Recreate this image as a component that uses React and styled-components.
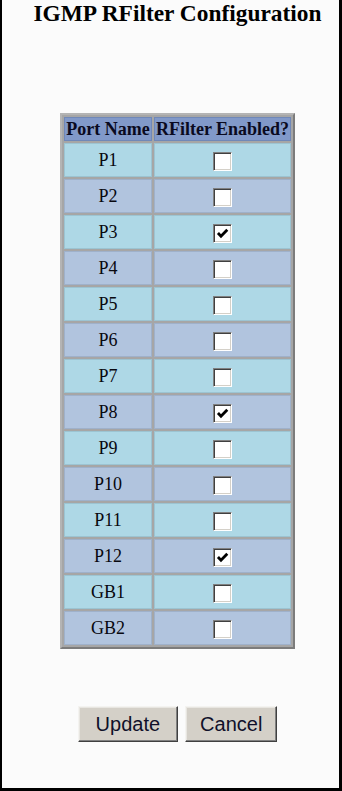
import styled, { createGlobalStyle } from "styled-components"

const GlobalStyle = createGlobalStyle`
  html, body {
    margin: 0;
    padding: 0;
    background: #ffffff;
  }
  * {
    box-sizing: border-box;
  }
`

const Page = styled.div`
  width: 342px;
  height: 791px;
  background: #fbfbfb;
  border-left: 2px solid #000;
  border-right: 3px solid #000;
  border-bottom: 3px solid #000;
  padding-left: 14px;
  display: flex;
  flex-direction: column;
  align-items: center;
  font-family: "Liberation Serif", "Times New Roman", serif;
  color: #000;
`

const Title = styled.h1`
  margin: 0;
  font-size: 23.4px;
  line-height: 27px;
  font-weight: bold;
  white-space: nowrap;
`

const Table = styled.table`
  margin-top: 86px;
  border-collapse: separate;
  border-spacing: 2px;
  background: #a6a6a6;
  border: 2px solid;
  border-color: #b4b4b4 #7c7c7c #7c7c7c #b4b4b4;
`

const HeadCell = styled.th`
  height: 24px;
  width: ${(p) => p.$width}px;
  padding: 0;
  background: #8199c9;
  border: 1px solid #7088b8;
  font-size: 18px;
  font-weight: bold;
  line-height: 20px;
  white-space: nowrap;
  color: #0a0a20;
`

const Cell = styled.td`
  height: 34px;
  padding: 0;
  text-align: center;
  vertical-align: middle;
  background: ${(p) => (p.$odd ? "#aed8e6" : "#b1c4de")};
  border: 1px solid ${(p) => (p.$odd ? "#9cc4d2" : "#9fb1ca")};
  font-size: 18px;
  color: #08080f;
`

const Box = styled.span`
  display: inline-flex;
  align-items: center;
  justify-content: center;
  width: 19px;
  height: 19px;
  vertical-align: middle;
  background: #fff;
  border: 1px solid;
  border-color: #808080 #ffffff #ffffff #808080;
  box-shadow: inset 1px 1px 0 #404040, inset -1px -1px 0 #d4d0c8;
`

const ButtonRow = styled.div`
  margin-top: 57px;
  display: flex;
  gap: 7px;
`

const Button = styled.button`
  height: 36px;
  padding: 0 ${(p) => p.$pad}px;
  background: #d4d0c8;
  border: 1px solid;
  border-color: #f4f3f0 #404040 #404040 #f4f3f0;
  box-shadow: inset -1px -1px 0 #808080, inset 1px 1px 0 #e8e6e1;
  font-family: "Liberation Sans", Arial, sans-serif;
  font-size: 20px;
  color: #10102a;
`

const Checkbox = ({ checked }) => (
  <Box>
    {checked && (
      <svg width="13" height="13" viewBox="0 0 12 12">
        <path d="M1.8 5.6 L4.6 8.6 L10.4 2.6" stroke="#000" strokeWidth="2.6" fill="none" />
      </svg>
    )}
  </Box>
)

const ports = [
  ["P1", false],
  ["P2", false],
  ["P3", true],
  ["P4", false],
  ["P5", false],
  ["P6", false],
  ["P7", false],
  ["P8", true],
  ["P9", false],
  ["P10", false],
  ["P11", false],
  ["P12", true],
  ["GB1", false],
  ["GB2", false],
]

const App = () => {
  return (
    <>
      <GlobalStyle />
      <Page>
        <Title>IGMP RFilter Configuration</Title>
        <Table>
          <thead>
            <tr>
              <HeadCell $width={88}>Port Name</HeadCell>
              <HeadCell $width={137}>RFilter Enabled?</HeadCell>
            </tr>
          </thead>
          <tbody>
            {ports.map(([name, on], i) => (
              <tr key={name}>
                <Cell $odd={i % 2 === 0}>{name}</Cell>
                <Cell $odd={i % 2 === 0}>
                  <Checkbox checked={on} />
                </Cell>
              </tr>
            ))}
          </tbody>
        </Table>
        <ButtonRow>
          <Button $pad={17}>Update</Button>
          <Button $pad={14}>Cancel</Button>
        </ButtonRow>
      </Page>
    </>
  )
}

export default App
